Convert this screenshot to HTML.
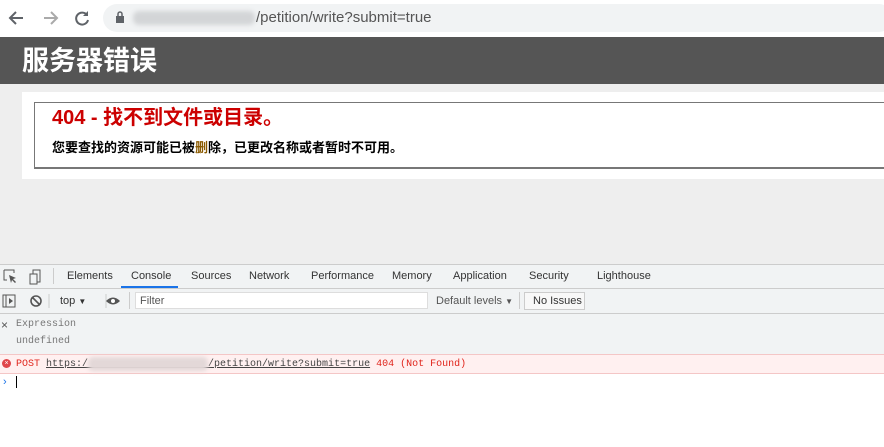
<!DOCTYPE html>
<html><head><meta charset="utf-8"><style>
*{margin:0;padding:0;box-sizing:border-box}
body{width:884px;height:447px;overflow:hidden;background:#fff;font-family:"Liberation Sans","Noto Sans CJK SC",sans-serif;position:relative}
.a{position:absolute}
.tab{position:absolute;top:270px;font-size:11px;color:#333}
.mono{font-family:"Liberation Mono","DejaVu Sans Mono",monospace;font-size:10px}
</style></head><body>
<div class="a" style="left:0;top:0;width:884px;height:36px;background:#fff"></div>
<svg class="a" style="left:8px;top:9px" width="84" height="18" viewBox="0 0 84 18">
<path d="M15 9H3M8 3L2 9l6 6" stroke="#5f6368" stroke-width="2" fill="none"/>
<path d="M36 9h12M43 3l6 6-6 6" stroke="#aaa" stroke-width="2" fill="none"/>
<path d="M79 6a6 6 0 1 0 1 5" stroke="#5f6368" stroke-width="2" fill="none"/><path d="M80 2v5h-5z" fill="#5f6368"/>
</svg>
<div class="a" style="left:103px;top:4px;width:790px;height:28px;border-radius:14px;background:#f1f3f4"></div>
<svg class="a" style="left:115px;top:11px" width="10" height="12"><rect x="1" y="5" width="8" height="7" fill="#5f6368"/><path d="M3 5V3a2 2 0 0 1 4 0v2" stroke="#5f6368" stroke-width="1.5" fill="none"/></svg>
<div class="a" style="left:133px;top:11px;width:122px;height:14px;background:#d3d5d7;border-radius:6px;filter:blur(2px)"></div>
<div class="a" style="left:256px;top:9px;font-size:15px;color:#555">/petition/write?submit=true</div>
<div class="a" style="left:0;top:37px;width:884px;height:47px;background:#555"></div>
<div class="a" style="left:22px;top:44px;font-size:27px;font-weight:bold;color:#fff;line-height:34px">服务器错误</div>
<div class="a" style="left:0;top:84px;width:884px;height:180px;background:#eee"></div>
<div class="a" style="left:22px;top:92px;width:862px;height:87px;background:#fff"></div>
<div class="a" style="left:34px;top:102px;width:860px;height:67px;border:1px solid #777;border-bottom-width:2px"></div>
<div class="a" style="left:52px;top:105px;font-size:20px;font-weight:bold;color:#c00;line-height:26px">404 - 找不到文件或目录。</div>
<div class="a" style="left:52px;top:139px;font-size:13px;font-weight:bold;color:#000;line-height:18px">您要查找的资源可能已被<span style="color:#8a5a00">删</span>除，已更改名称或者暂时不可用。</div>
<div class="a" style="left:0;top:264px;width:884px;height:50px;background:#f1f3f4;border-top:1px solid #ccc"></div>
<div class="a" style="left:0;top:288px;width:884px;height:1px;background:#ccc"></div>
<div class="a" style="left:0;top:313px;width:884px;height:1px;background:#ccc"></div>
<svg class="a" style="left:3px;top:269px" width="40" height="16"><path d="M1 1h10v3M1 1v10h3" stroke="#555" fill="none"/><path d="M6 6l7 3-3 1 3 3-1 1-3-3-1 3z" fill="#555"/><rect x="27" y="5" width="7" height="10" stroke="#555" fill="none"/><path d="M30 5V1h7v12h-3" stroke="#555" fill="none"/></svg>
<div class="a" style="left:53px;top:268px;width:1px;height:16px;background:#ccc"></div>
<div class="tab" style="left:67px">Elements</div>
<div class="tab" style="left:131px">Console</div>
<div class="a" style="left:121px;top:286px;width:57px;height:2px;background:#1a73e8"></div>
<div class="tab" style="left:191px">Sources</div>
<div class="tab" style="left:249px">Network</div>
<div class="tab" style="left:311px">Performance</div>
<div class="tab" style="left:392px">Memory</div>
<div class="tab" style="left:453px">Application</div>
<div class="tab" style="left:529px">Security</div>
<div class="tab" style="left:597px">Lighthouse</div>
<svg class="a" style="left:2px;top:293px" width="120" height="16"><rect x="1" y="2" width="12" height="12" stroke="#555" fill="none"/><path d="M4 2v12" stroke="#555"/><path d="M7 5l4 3-4 3z" fill="#555"/><circle cx="34" cy="8" r="5" stroke="#555" stroke-width="1.6" fill="none"/><path d="M30 4l8 8" stroke="#555" stroke-width="1.6"/><path d="M47 1v14" stroke="#ccc"/><path d="M104 1v14" stroke="#ccc"/><path d="M104 8q7-7 14 0q-7 7-14 0z" fill="#555"/><circle cx="111" cy="8" r="2" fill="#fff"/></svg>
<div class="a" style="left:60px;top:295px;font-size:11px;color:#333">top <span style="font-size:8px">▼</span></div>
<div class="a" style="left:129px;top:292px;width:1px;height:17px;background:#ccc"></div>
<div class="a" style="left:135px;top:292px;width:293px;height:17px;background:#fff;border:1px solid #ddd"></div>
<div class="a" style="left:140px;top:295px;font-size:11px;color:#555">Filter</div>
<div class="a" style="left:436px;top:295px;font-size:11px;color:#555">Default levels <span style="font-size:8px">▼</span></div>
<div class="a" style="left:519px;top:292px;width:1px;height:17px;background:#ccc"></div>
<div class="a" style="left:524px;top:292px;width:61px;height:18px;border:1px solid #ccc;background:#f8f8f8;font-size:11px;color:#333;padding:2px 0 0 8px">No Issues</div>
<div class="a" style="left:0;top:314px;width:884px;height:40px;background:#f1f3f4"></div>
<div class="a" style="left:1px;top:318px;font-size:12px;color:#555">×</div>
<div class="a mono" style="left:16px;top:319px;color:#777">Expression</div>
<div class="a mono" style="left:16px;top:336px;color:#777">undefined</div>
<div class="a" style="left:0;top:354px;width:884px;height:20px;background:#fff0f0;border-top:1px solid #f4c6c6;border-bottom:1px solid #f4c6c6"></div>
<div class="a" style="left:2px;top:359px;width:9px;height:9px;border-radius:50%;background:#e0464a;color:#fff;font-size:7px;line-height:9px;text-align:center">×</div>
<div class="a mono" style="left:16px;top:359px;color:#e0241b;white-space:pre">POST <span style="color:#444;text-decoration:underline">https:/                    /petition/write?submit=true</span> 404 (Not Found)</div>
<div class="a" style="left:88px;top:357px;width:120px;height:14px;background:#e3d8d8;border-radius:5px;filter:blur(2px)"></div>
<div class="a" style="left:3px;top:376px;font-size:11px;color:#1a73e8">›</div>
<div class="a" style="left:16px;top:376px;width:1px;height:12px;background:#000"></div>
</body></html>
